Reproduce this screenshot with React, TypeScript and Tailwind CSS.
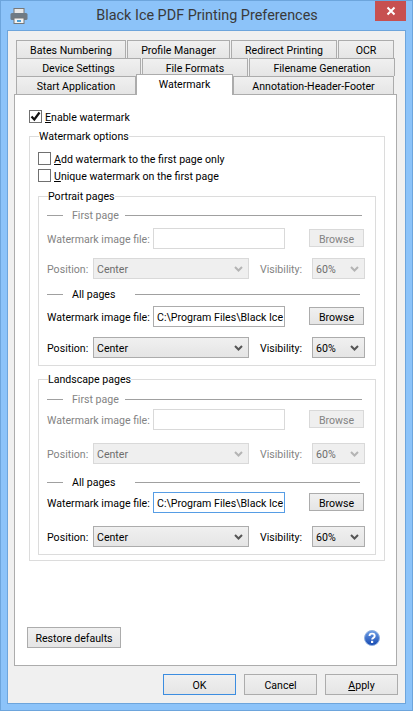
import React from "react";

const Chevron = ({ dim }: { dim?: boolean }) => (
  <svg width="9" height="6" viewBox="0 0 9 6" className="shrink-0">
    <path d="M1 1l3.5 3.5L8 1" fill="none" stroke={dim ? "#b4b4b4" : "#555"} strokeWidth="2" />
  </svg>
);

const Select = ({ value, w, dim }: { value: string; w: string; dim?: boolean }) => (
  <div
    className={`${w} h-[21px] shrink-0 flex items-center justify-between pl-[3px] pr-[5px] border ${
      dim ? "border-[#d9d9d9] bg-[#efefef] text-[#6d6d6d]" : "border-[#acacac] bg-gradient-to-b from-[#f0f0f0] to-[#e5e5e5] text-black"
    }`}
  >
    <span className="pt-[2px]">{value}</span>
    <Chevron dim={dim} />
  </div>
);

const Button = ({ label, w, h, dim, cls = "" }: { label: React.ReactNode; w: string; h: string; dim?: boolean; cls?: string }) => (
  <div
    className={`${w} ${h} shrink-0 flex items-center justify-center border pt-[2px] ${cls || (dim
      ? "border-[#d9d9d9] bg-[#efefef] text-[#838383]"
      : "border-[#acacac] bg-gradient-to-b from-[#f0f0f0] to-[#e5e5e5] text-black")}`}
  >
    {label}
  </div>
);

const Sub = ({ title, gapLine, lineW, dim }: { title: string; gapLine: string; lineW: string; dim?: boolean }) => (
  <div className={`h-[14px] flex items-center ${dim ? "text-[#838383]" : "text-black"}`}>
    <div className="w-[16px] h-px bg-[#a0a0a0] shrink-0" />
    <span className="ml-[9px] w-[54px] shrink-0 whitespace-nowrap pt-[2px]">{title}</span>
    <div className={`${gapLine} ${lineW} h-px bg-[#a0a0a0] shrink-0`} />
  </div>
);

const Rows = ({ dim, path, focused, top1, top2 }: { dim?: boolean; path?: string; focused?: boolean; top1: string; top2: string }) => (
  <div className={dim ? "text-[#838383]" : "text-black"}>
    <div className={`${top1} flex items-center h-[21px]`}>
      <span className="w-[106px] shrink-0 whitespace-nowrap pt-[2px]">Watermark image file:</span>
      <div
        className={`w-[132px] h-[21px] shrink-0 border overflow-hidden whitespace-nowrap pl-[3px] pr-[2px] pt-px leading-[19px] ${
          focused ? "border-[#569de5] bg-white" : dim ? "border-[#d9d9d9] bg-white" : "border-[#acacac] bg-white"
        }`}
      >
        {path}
      </div>
      <Button label={<span className="pt-[2px]">Browse</span>} w="w-[55px] ml-[24px] self-start mt-px" h="h-[18px]" dim={dim} />
    </div>
    <div className={`${top2} flex items-center h-[21px]`}>
      <span className="w-[46px] shrink-0 pt-[2px]">Position:</span>
      <Select value="Center" w="w-[156px]" dim={dim} />
      <span className="ml-[11px] w-[52px] shrink-0 pt-[2px]">Visibility:</span>
      <Select value="60%" w="w-[53px]" dim={dim} />
    </div>
  </div>
);

const PATH = "C:\\Program Files\\Black Ice";

const Group = ({ title, children, cls }: { title: string; children: React.ReactNode; cls: string }) => (
  <fieldset className={`border border-[#dcdcdc] ${cls}`}>
    <legend className="ml-[1px] px-0 pt-[2px] leading-[14px] text-black">{title}</legend>
    {children}
  </fieldset>
);

const Tab = ({ label, w }: { label: string; w: string }) => (
  <div className={`${w} h-[18px] shrink-0 border border-b-0 border-[#acacac] pt-[2px] bg-gradient-to-b from-[#f0f0f0] to-[#e5e5e5] flex items-center justify-center whitespace-nowrap`}>
    {label}
  </div>
);

const U = ({ c }: { c: string }) => <span className="underline">{c}</span>;

const Check = ({ checked, children, cls = "" }: { checked?: boolean; children: React.ReactNode; cls?: string }) => (
  <div className={`flex items-center h-[13px] ${cls}`}>
    <div className="w-[13px] h-[13px] border border-[#707070] bg-white shrink-0 flex items-center justify-center">
      {checked && (
        <svg width="11" height="11" viewBox="0 0 11 11">
          <path d="M1.5 5.5l2.8 3L9.5 1.5" fill="none" stroke="#111" strokeWidth="2.2" />
        </svg>
      )}
    </div>
    <span className="ml-[3px] whitespace-nowrap text-black pt-[2px]">{children}</span>
  </div>
);

export default function App() {
  return (
    <div className="w-[413px] h-[711px] bg-[#8cc3f9] border border-[#6da5dc] overflow-hidden flex flex-col font-['Roboto',sans-serif] text-[10.6px] text-black">
      <div className="h-[29px] shrink-0 flex items-start relative">
        <svg width="18" height="16" viewBox="0 0 18 16" className="ml-[9px] mt-[7px] shrink-0">
          <rect x="4" y="0.5" width="10" height="5" fill="#e8e8e8" stroke="#777" />
          <rect x="0.5" y="5" width="17" height="7" rx="1.5" fill="#6f7a84" />
          <rect x="4" y="10" width="10" height="5.5" fill="#f4f4f4" stroke="#777" />
          <rect x="7" y="12" width="4" height="2" fill="#4aa0d8" />
        </svg>
        <div className="flex-1 text-center text-[14.4px] leading-[30px] text-[#3a3a3a] pr-[26px] whitespace-nowrap">
          Black Ice PDF Printing Preferences
        </div>
        <div className="absolute right-[6px] top-0 w-[31px] h-[20px] bg-[#c75050] flex items-center justify-center">
          <svg width="10" height="10" viewBox="0 0 10 10">
            <path d="M1.5 1.5l7 7M8.5 1.5l-7 7" stroke="#fff" strokeWidth="2" />
          </svg>
        </div>
      </div>

      <div className="mx-[6px] h-[674px] w-[399px] shrink-0 border border-[#6da5dc] bg-[#f0f0f0] pl-[6px] pt-[9px]">
        <div className="ml-[1px] flex flex-col">
          <div className="flex gap-px ml-[1px]">
            <Tab label="Bates Numbering" w="w-[110px]" />
            <Tab label="Profile Manager" w="w-[103px]" />
            <Tab label="Redirect Printing" w="w-[106px]" />
            <Tab label="OCR" w="w-[56px]" />
          </div>
          <div className="flex gap-px ml-[1px]">
            <Tab label="Device Settings" w="w-[125px]" />
            <Tab label="File Formats" w="w-[106px]" />
            <Tab label="Filename Generation" w="w-[146px]" />
          </div>
          <div className="flex ml-[1px] items-end h-[18px]">
            <Tab label="Start Application" w="w-[120px]" />
            <div className="w-[97px] h-[21px] shrink-0 -mb-px z-10 border border-b-0 border-[#acacac] bg-white text-center pt-px leading-[17px]">Watermark</div>
            <Tab label="Annotation-Header-Footer" w="w-[161px]" />
          </div>
        </div>

        <div className="w-[383px] h-[572px] border border-[#acacac] bg-white pl-[14px] pt-[15px]">
          <Check checked><U c="E" />nable watermark</Check>

          <Group title="Watermark options" cls="w-[356px] h-[433px] mt-[5px] pl-[8px]">
            <Check cls="mt-[8px]"><U c="A" />dd watermark to the first page only</Check>
            <Check cls="mt-[4px]"><U c="U" />nique watermark on the first page</Check>

            <Group title="Portrait pages" cls="w-[338px] h-[178px] mt-[6px] pl-[8px]">
              <div className="mt-[4px]"><Sub title="First page" gapLine="ml-[-1px]" lineW="w-[237px]" dim /></div>
              <Rows dim top1="mt-[6px]" top2="mt-[9px]" />
              <div className="mt-[8px]"><Sub title="All pages" gapLine="ml-[9px]" lineW="w-[225px]" /></div>
              <Rows path={PATH} top1="mt-[5px]" top2="mt-[10px]" />
            </Group>

            <Group title="Landscape pages" cls="w-[338px] h-[184px] mt-[5px] pl-[8px]">
              <div className="mt-[5px]"><Sub title="First page" gapLine="ml-[-1px]" lineW="w-[237px]" dim /></div>
              <Rows dim top1="mt-[3px]" top2="mt-[13px]" />
              <div className="mt-[11px]"><Sub title="All pages" gapLine="ml-[9px]" lineW="w-[225px]" /></div>
              <Rows path={PATH} focused top1="mt-[3px]" top2="mt-[13px]" />
            </Group>
          </Group>

          <div className="mt-[66px] -ml-[2px] flex items-center pr-[5px] justify-between w-[358px]">
            <Button label="Restore defaults" w="w-[94px]" h="h-[21px]" />
            <svg width="16" height="16" viewBox="0 0 16 16">
              <defs>
                <linearGradient id="h" x1="0" y1="0" x2="0" y2="1">
                  <stop offset="0" stopColor="#6f9fe6" />
                  <stop offset="1" stopColor="#1447b0" />
                </linearGradient>
              </defs>
              <circle cx="8" cy="8" r="7.5" fill="url(#h)" stroke="#8fb0e0" />
              <path d="M5.5 6c0-3.2 5.2-3.2 5.2 0 0 2-2.6 1.8-2.6 3.6" fill="none" stroke="#fff" strokeWidth="1.9" />
              <rect x="7" y="10.8" width="2.2" height="2.2" fill="#fff" />
            </svg>
          </div>
        </div>

        <div className="flex gap-[8px] mt-[8px] ml-[149px]">
          <Button label="OK" w="w-[73px]" h="h-[21px]" cls="border-[#3c8de0] bg-gradient-to-b from-[#f0f0f0] to-[#e5e5e5]" />
          <Button label="Cancel" w="w-[73px]" h="h-[21px]" />
          <Button label={<span><U c="A" />pply</span>} w="w-[73px]" h="h-[21px]" />
        </div>
      </div>
    </div>
  );
}
